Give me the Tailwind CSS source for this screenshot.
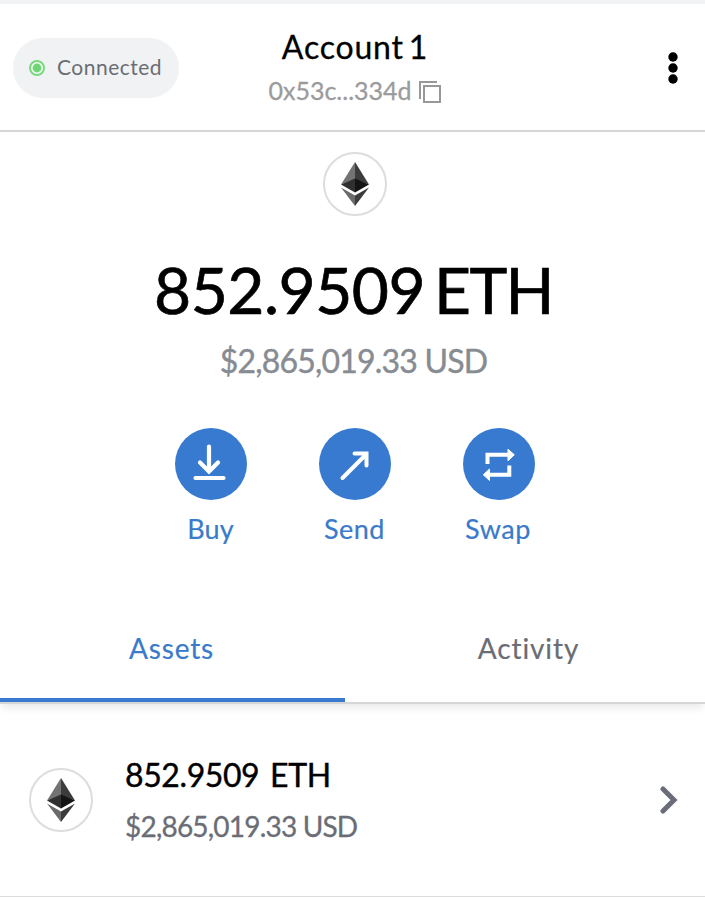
<!DOCTYPE html>
<html lang="en">
<head>
<meta charset="utf-8">
<title>Wallet</title>
<script src="https://cdn.jsdelivr.net/npm/@tailwindcss/browser@4"></script>
</head>
<body class="w-[705px] h-[897px] overflow-hidden bg-white font-['Lato',sans-serif] text-black">
<svg class="hidden">
  <symbol id="eth" viewBox="0 0 28 44">
    <path d="M14 0L0 22.5L14 17.5Z" fill="#737373"/>
    <path d="M14 0L28 22.5L14 17.5Z" fill="#3c3c3b"/>
    <path d="M0 22.5L14 16.5V30.5Z" fill="#303030"/>
    <path d="M28 22.5L14 16.5V30.5Z" fill="#141414"/>
    <path d="M0 25.5L14 33.5V44Z" fill="#6b6b6b"/>
    <path d="M28 25.5L14 33.5V44Z" fill="#3c3c3b"/>
  </symbol>
</svg>
<div class="h-1 bg-[#f2f3f5]"></div>
<header class="h-32 border-b-2 border-[#d6d6d6] grid grid-cols-[200px_310px_195px]">
  <div class="pl-[13px] pt-[34px]">
    <div class="w-[166px] h-[60px] rounded-full bg-[#f1f2f4] flex items-center pl-4 gap-3">
      <svg class="size-4" viewBox="0 0 16 16"><circle cx="8" cy="8" r="7" fill="#f4fbf4" stroke="#79d97f" stroke-width="2"/><circle cx="8" cy="8" r="4.4" fill="#6fd676"/></svg>
      <span class="text-[21px] leading-[24px] pb-[3px] tracking-[0.5px] text-[#6a6d73]">Connected</span>
    </div>
  </div>
  <div class="flex flex-col items-center pt-6">
    <h1 class="text-[32px] leading-[38px] whitespace-nowrap tracking-[0.8px] [word-spacing:-4px] [-webkit-text-stroke:0.3px]">Account 1</h1>
    <div class="flex items-center gap-[7px] mt-[9px] h-[30px] pr-px">
      <span class="text-[25px] leading-[30px] text-[#9b9b9b] [-webkit-text-stroke:0.3px]">0x53c...334d</span>
      <svg class="w-[22px] h-[22px] mt-1" viewBox="0 0 22 22" fill="none" stroke="#989898" stroke-width="2"><path d="M1 18V1H18"/><path d="M5 5H21V21H5Z"/></svg>
    </div>
  </div>
  <div class="flex justify-end pr-[27px] pt-12">
    <svg class="w-[10px] h-8" viewBox="0 0 10 32"><circle cx="5" cy="5" r="4.7"/><circle cx="5" cy="16" r="4.7"/><circle cx="5" cy="27" r="4.7"/></svg>
  </div>
</header>
<main>
  <section class="h-[466px] w-[709px] flex flex-col items-center pt-5">
    <div class="size-16 rounded-full border-2 border-[#dddddd] flex items-center justify-center"><svg class="w-7 h-11"><use href="#eth"/></svg></div>
    <div class="mt-[36px] pr-[2px] text-[64px] leading-[76px] whitespace-nowrap flex gap-[9px] [-webkit-text-stroke:0.7px]"><span class="tracking-[-0.5px]">852.9509</span><span class="tracking-[-1.6px]">ETH</span></div>
    <div class="mt-[13px] pr-[2px] text-[32px] leading-[40px] tracking-[-0.8px] whitespace-nowrap text-[#878b92] [-webkit-text-stroke:0.4px]">$2,865,019.33 USD</div>
    <div class="mt-[47px] flex gap-[72px] text-[#3a7aca] text-[27px] leading-[32px] [-webkit-text-stroke:0.2px]">
      <div class="w-[72px] flex flex-col items-center gap-[13px]">
        <svg class="size-[72px]" viewBox="0 0 72 72" fill="none" stroke="#fff" stroke-width="4.2" stroke-linecap="round"><circle cx="36" cy="36" r="36" fill="#387ad0" stroke="none"/><path d="M34 18.5V43M25 34.5L34 43.5L43 34.5"/><path d="M20.5 50H48.5"/></svg>
        <span class="tracking-[0.2px]">Buy</span>
      </div>
      <div class="w-[72px] flex flex-col items-center gap-[13px]">
        <svg class="size-[72px]" viewBox="0 0 72 72" fill="none" stroke="#fff" stroke-width="4" stroke-linecap="round"><circle cx="36" cy="36" r="36" fill="#387ad0" stroke="none"/><path d="M23.5 50L47 26.5M35.5 25.5H47.5V37.5"/></svg>
        <span class="tracking-[0.5px]">Send</span>
      </div>
      <div class="w-[72px] flex flex-col items-center gap-[13px]">
        <svg class="size-[72px]" viewBox="0 0 72 72" fill="#fff"><circle cx="36" cy="36" r="36" fill="#387ad0"/><path d="M24.5 36V26.7H45" fill="none" stroke="#fff" stroke-width="4"/><path d="M45 21.2L51.300 26.800L45 32.800Z" stroke="#fff" stroke-linejoin="round"/><path d="M46.300 37.500V46.700H26" fill="none" stroke="#fff" stroke-width="4"/><path d="M26.500 41L20.300 46.800L26.500 52.500Z" stroke="#fff" stroke-linejoin="round"/></svg>
        <span class="tracking-[0.6px] pr-px">Swap</span>
      </div>
    </div>
  </section>
  <nav class="h-[106px] border-b-2 border-[#d6d6d6] shadow-[0_6px_8px_-2px_rgba(0,0,0,0.09)] flex text-[28px] leading-[34px] [-webkit-text-stroke:0.2px]">
    <div class="w-[345px] h-[104px] border-b-4 border-[#387ad0] text-[#3a7aca] text-center pt-[33px] pr-[2px] tracking-[0.8px]">Assets</div>
    <div class="flex-1 text-center pt-[33px] pl-[7px] text-[#6a6d73] tracking-[0.9px]">Activity</div>
  </nav>
  <section class="h-[193px] border-b border-[#dcdcdc] flex items-center pl-[29px] pr-[27px]">
    <div class="size-16 rounded-full border-2 border-[#dddddd] flex items-center justify-center"><svg class="w-7 h-11"><use href="#eth"/></svg></div>
    <div class="ml-8 flex-1">
      <div class="text-[32px] leading-[40px] tracking-[-0.4px] [word-spacing:3px] whitespace-nowrap [-webkit-text-stroke:0.4px]">852.9509 ETH</div>
      <div class="mt-[11px] text-[28px] leading-[40px] tracking-[-0.8px] whitespace-nowrap text-[#6a6d75] [-webkit-text-stroke:0.3px]">$2,865,019.33 USD</div>
    </div>
    <svg class="w-[18px] h-7" viewBox="0 0 18 28" fill="none" stroke="#6a6d77" stroke-width="5" stroke-linecap="round"><path d="M3 3L14 14L3 25"/></svg>
  </section>
</main>
</body>
</html>
